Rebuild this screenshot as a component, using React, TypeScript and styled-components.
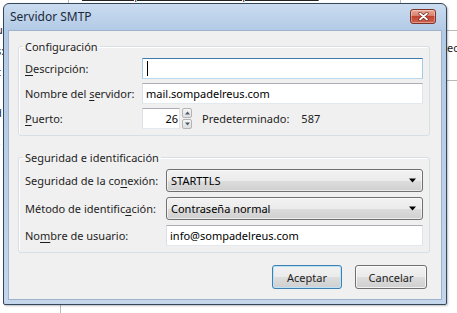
import React from 'react'
import styled, { createGlobalStyle } from 'styled-components'

const GlobalStyle = createGlobalStyle`
  html, body {
    margin: 0;
    padding: 0;
    background: #ffffff;
  }
  body {
    font-family: "Noto Sans", "DejaVu Sans", sans-serif;
    font-size: 11px;
    color: #000;
  }
`

const Desktop = styled.div`
  position: relative;
  width: 457px;
  height: 313px;
  overflow: hidden;
  background: #ffffff;
`

// bits of the window behind the dialog
const BehindText = styled.span<{ $x: number; $y: number }>`
  position: absolute;
  left: ${p => p.$x}px;
  top: ${p => p.$y}px;
  font-size: 11px;
  line-height: 14px;
  white-space: nowrap;
  color: #222;
`

const BehindLine = styled.div<{ $x: number; $y: number; $w: number; $h: number }>`
  position: absolute;
  left: ${p => p.$x}px;
  top: ${p => p.$y}px;
  width: ${p => p.$w}px;
  height: ${p => p.$h}px;
  background: #b9b9b9;
`

const Window = styled.div`
  position: absolute;
  left: 3px;
  top: 3px;
  width: 444px;
  height: 302px;
  box-sizing: border-box;
  border: 1px solid #34465a;
  border-radius: 6px 6px 2px 2px;
  background: linear-gradient(#cadcf0, #b3cae6 26px, #bbd0e9 60%, #c3d6ec);
  display: flex;
  flex-direction: column;
  box-shadow: 1px 1px 2px rgba(0, 0, 0, 0.25);
`

const TitleBar = styled.div`
  height: 26px;
  flex: none;
  display: flex;
  align-items: center;
  justify-content: space-between;
  padding: 0 10px 0 6px;
`

const Title = styled.span`
  font-size: 12px;
  color: #1a2a3a;
  margin-top: -1px;
`

const CloseButton = styled.div`
  width: 26px;
  height: 15px;
  box-sizing: border-box;
  border: 1px solid #7d3428;
  border-radius: 3px;
  background: linear-gradient(#eaa898, #d8806d 45%, #c2432f 50%, #cf6450 100%);
  box-shadow: inset 0 0 0 1px rgba(255, 255, 255, 0.35);
  display: flex;
  align-items: center;
  justify-content: center;
  margin-top: -2px;
`

const Body = styled.div`
  flex: 1;
  margin: 0 4px 4px;
  background: #f0f0f0;
  border: 1px solid #9eb3cb;
  padding: 8px 11px 0 9px;
  display: flex;
  flex-direction: column;
`

const Group = styled.fieldset<{ $top: number }>`
  margin: ${p => p.$top}px 0 0;
  padding: 4px 6px 6px;
  border: 1px solid #d5dfe5;
  border-radius: 3px;
  box-shadow: inset 1px 1px 0 #fff;
  display: flex;
  flex-direction: column;
  gap: 4px;
`

const Legend = styled.legend`
  padding: 0 2px;
  margin-left: -2px;
  line-height: 15px;
  color: #1e1e1e;
`

const Row = styled.div`
  display: flex;
  align-items: center;
`

const Label = styled.label<{ $w: number }>`
  width: ${p => p.$w}px;
  flex: none;
  color: #1e1e1e;
  white-space: nowrap;
  u {
    text-decoration: underline;
    text-underline-offset: 2px;
  }
`

const TextBox = styled.div<{ $focused?: boolean }>`
  flex: 1;
  height: 21px;
  box-sizing: border-box;
  background: #fff;
  border: 1px solid;
  border-color: ${p =>
    p.$focused ? '#3d7bad #a4c9e3 #b7d9ed #a4c9e3' : '#abadb3 #e2e3ea #e3e9ef #dbdfe6'};
  padding: 0 3px;
  display: flex;
  align-items: center;
  white-space: nowrap;
  overflow: hidden;
`

const Caret = styled.span`
  width: 1px;
  height: 15px;
  background: #000;
  margin-left: 1px;
`

const PortBox = styled(TextBox)`
  flex: none;
  width: 38px;
  justify-content: flex-end;
  padding-right: 1px;
`

const Spinner = styled.div`
  width: 10px;
  height: 21px;
  margin-left: 2px;
  display: flex;
  flex-direction: column;
  gap: 1px;
  color: #4a5a6a;
`

const SpinHalf = styled.div`
  flex: 1;
  box-sizing: border-box;
  border: 1px solid #b4b4b4;
  border-radius: 2px;
  background: linear-gradient(#f6f6f6, #dedede);
  display: flex;
  align-items: center;
  justify-content: center;
`

const Info = styled.span<{ $ml: number }>`
  margin-left: ${p => p.$ml}px;
  color: #1e1e1e;
`

const Select = styled.div`
  flex: 1;
  height: 23px;
  box-sizing: border-box;
  border: 1px solid #707070;
  border-radius: 3px;
  background: linear-gradient(#f2f2f2 0%, #ebebeb 50%, #dddddd 51%, #cfcfcf 100%);
  box-shadow: inset 0 0 0 1px rgba(255, 255, 255, 0.6);
  padding: 0 6px 0 4px;
  display: flex;
  align-items: center;
  justify-content: space-between;
`

const Buttons = styled.div`
  display: flex;
  justify-content: flex-end;
  gap: 13px;
  margin: 12px 3px 0 0;
`

const Button = styled.div<{ $w: number; $default?: boolean }>`
  width: ${p => p.$w}px;
  height: 24px;
  box-sizing: border-box;
  border: 1px solid ${p => (p.$default ? '#3c7fb1' : '#707070')};
  border-radius: 3px;
  background: linear-gradient(#f2f2f2 0%, #ebebeb 50%, #dddddd 51%, #cfcfcf 100%);
  box-shadow: inset 0 0 0 1px ${p => (p.$default ? '#bfe3f6' : 'rgba(255,255,255,0.7)')};
  display: flex;
  align-items: center;
  justify-content: center;
  color: #1e1e1e;
`

const Arrow = ({ up, size = 7 }: { up?: boolean; size?: number }) => (
  <svg width={size} height={Math.ceil(size / 2) + 1} viewBox="0 0 7 4">
    <path d={up ? 'M0 4 L3.5 0 L7 4 Z' : 'M0 0 L7 0 L3.5 4 Z'} fill="currentColor" />
  </svg>
)

export default function App() {
  return (
    <>
      <GlobalStyle />
      <Desktop>
        <BehindText $x={82} $y={-12} style={{ textDecoration: 'underline' }}>
          info@sompadelreus.com - sompadelreus.com
        </BehindText>
        <BehindLine $x={68} $y={0} $w={1} $h={4} />
        <BehindLine $x={400} $y={0} $w={1} $h={4} />
        <BehindText $x={-4} $y={23}>u</BehindText>
        <BehindText $x={-4} $y={44}>s:</BehindText>
        <BehindText $x={-3} $y={65}>t</BehindText>
        <BehindText $x={-5} $y={106}>d</BehindText>
        <BehindText $x={-5} $y={135}>s</BehindText>
        <BehindLine $x={447} $y={30} $w={10} $h={1} />
        <BehindText $x={447} $y={41}>ec</BehindText>
        <BehindLine $x={447} $y={80} $w={10} $h={1} />
        <BehindLine $x={60} $y={305} $w={1} $h={8} />

        <Window>
          <TitleBar>
            <Title>Servidor SMTP</Title>
            <CloseButton>
              <svg width="11" height="9" viewBox="0 0 11 9">
                <path d="M2 1.5 L9 7.5 M9 1.5 L2 7.5" stroke="#6b2a20" strokeWidth="3.2" strokeLinecap="round" />
                <path d="M2 1.5 L9 7.5 M9 1.5 L2 7.5" stroke="#ffffff" strokeWidth="1.8" strokeLinecap="round" />
              </svg>
            </CloseButton>
          </TitleBar>
          <Body>
            <Group $top={0}>
              <Legend>Configuración</Legend>
              <Row>
                <Label $w={117}><u>D</u>escripción:</Label>
                <TextBox $focused>
                  <Caret />
                </TextBox>
              </Row>
              <Row>
                <Label $w={117}>Nombre del <u>s</u>ervidor:</Label>
                <TextBox>mail.sompadelreus.com</TextBox>
              </Row>
              <Row>
                <Label $w={117}><u>P</u>uerto:</Label>
                <PortBox>26</PortBox>
                <Spinner>
                  <SpinHalf><Arrow up size={5} /></SpinHalf>
                  <SpinHalf><Arrow size={5} /></SpinHalf>
                </Spinner>
                <Info $ml={10}>Predeterminado:</Info>
                <Info $ml={12}>587</Info>
              </Row>
            </Group>
            <Group $top={14}>
              <Legend>Seguridad e identificación</Legend>
              <Row>
                <Label $w={141}>Seguridad de la co<u>n</u>exión:</Label>
                <Select>
                  <span>STARTTLS</span>
                  <Arrow />
                </Select>
              </Row>
              <Row style={{ marginTop: 1 }}>
                <Label $w={141}>Método de identific<u>a</u>ción:</Label>
                <Select>
                  <span>Contraseña normal</span>
                  <Arrow />
                </Select>
              </Row>
              <Row style={{ marginTop: 1 }}>
                <Label $w={141}>No<u>m</u>bre de usuario:</Label>
                <TextBox>info@sompadelreus.com</TextBox>
              </Row>
            </Group>
            <Buttons>
              <Button $w={70} $default>Aceptar</Button>
              <Button $w={72}>Cancelar</Button>
            </Buttons>
          </Body>
        </Window>
      </Desktop>
    </>
  )
}
